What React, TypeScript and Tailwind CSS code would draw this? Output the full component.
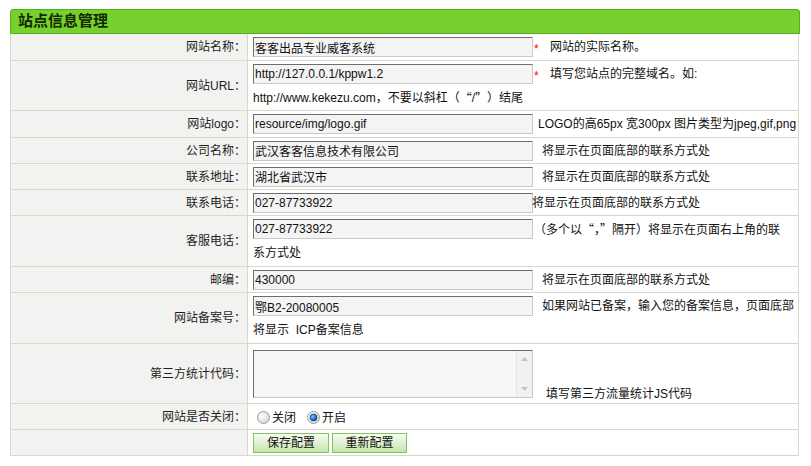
import React from "react";

const FONT = "font-['Liberation_Sans','Noto_Sans_CJK_SC',sans-serif]";
const CJK = "font-['Noto_Sans_CJK_SC',sans-serif]";

function Row({
  label,
  h,
  children,
  valueClass = "",
}: {
  label: string;
  h: string;
  children?: React.ReactNode;
  valueClass?: string;
}) {
  return (
    <div className={`flex border-b border-[#d6d9c8] ${h}`}>
      <div className="w-[237px] shrink-0 border-r border-[#d6d9c8] bg-[#f2f2f0] flex items-center justify-end pr-[1px] text-[#1e1e1e]">
        {label}
      </div>
      <div className={`flex-1 min-w-0 pl-[5px] ${valueClass}`}>{children}</div>
    </div>
  );
}

function Field({ value }: { value: string }) {
  return (
    <input
      readOnly
      value={value}
      className={`${FONT} w-[280px] h-[20px] shrink-0 border border-t-[#6e6e6e] border-l-[#6e6e6e] border-r-[#c9c9c9] border-b-[#c9c9c9] bg-[#f4f4f4] px-[1px] text-[12px] text-[#111] outline-none`}
    />
  );
}

function Star() {
  return (
    <span className="w-[17px] shrink-0 pl-[1px] text-[#f00] relative top-[2px]">*</span>
  );
}

function Radio({ checked }: { checked?: boolean }) {
  return (
    <svg width="13" height="13" viewBox="0 0 13 13" className="shrink-0">
      <defs>
        <radialGradient id={checked ? "rg-on" : "rg-off"} cx="0.35" cy="0.35" r="0.75">
          <stop offset="0" stopColor="#ffffff" />
          <stop offset="1" stopColor="#d3d3cf" />
        </radialGradient>
        <radialGradient id="dot" cx="0.35" cy="0.35" r="0.8">
          <stop offset="0" stopColor="#7cc4ff" />
          <stop offset="0.6" stopColor="#1a74cf" />
          <stop offset="1" stopColor="#0a3f86" />
        </radialGradient>
      </defs>
      <circle cx="6.5" cy="6.5" r="6" fill={`url(#${checked ? "rg-on" : "rg-off"})`} stroke="#9a9b9b" />
      {checked && <circle cx="6.5" cy="6.5" r="3.4" fill="url(#dot)" stroke="#0b3a76" strokeWidth="0.8" />}
    </svg>
  );
}

export default function App() {
  return (
    <div className={`${FONT} bg-white w-[811px] h-[466px] text-[12px] text-[#111]`}>
      <div className="ml-[10px] pt-[9px] w-[790px]">
        <div className="h-[25px] bg-[#76d02e] border border-[#58ad1f] rounded-t-[3px] flex items-center pl-[7px] text-[15px] font-bold text-[#142b00]">
          站点信息管理
        </div>
        <div className="w-[789px] border-x border-[#d6d9c8]">
          <Row label="网站名称：" h="h-[27px]" valueClass="flex items-center">
            <Field value="客客出品专业威客系统" />
            <Star />
            <span>网站的实际名称。</span>
          </Row>

          <Row label="网站URL：" h="h-[50px]" valueClass="pt-[3px]">
            <div className="h-[20px] flex items-center">
              <Field value="http://127.0.0.1/kppw1.2" />
              <Star />
              <span>填写您站点的完整域名。如:</span>
            </div>
            <div className="mt-[4px] h-[20px] flex items-center whitespace-nowrap">
              http://www.kekezu.com，不要以斜杠（<span className={CJK}>“</span>/<span className={CJK}>”</span>）结尾
            </div>
          </Row>

          <Row label="网站logo：" h="h-[27px]" valueClass="flex items-center">
            <Field value="resource/img/logo.gif" />
            <span className="ml-[5px] whitespace-nowrap">LOGO的高65px 宽300px 图片类型为jpeg,gif,png</span>
          </Row>

          <Row label="公司名称：" h="h-[26px]" valueClass="flex items-center">
            <Field value="武汉客客信息技术有限公司" />
            <span className="ml-[9px]">将显示在页面底部的联系方式处</span>
          </Row>

          <Row label="联系地址：" h="h-[26px]" valueClass="flex items-center">
            <Field value="湖北省武汉市" />
            <span className="ml-[9px]">将显示在页面底部的联系方式处</span>
          </Row>

          <Row label="联系电话：" h="h-[26px]" valueClass="flex items-center">
            <Field value="027-87733922" />
            <span className="-ml-[1px]">将显示在页面底部的联系方式处</span>
          </Row>

          <Row label="客服电话：" h="h-[51px]" valueClass="pt-[3px]">
            <div className="h-[20px] flex items-center whitespace-nowrap">
              <Field value="027-87733922" />
              <span className={`${CJK} ml-[1px]`}>（多个以“，”隔开）将显示在页面右上角的联</span>
            </div>
            <div className="mt-[4px] h-[20px] flex items-center">系方式处</div>
          </Row>

          <Row label="邮编：" h="h-[26px]" valueClass="flex items-center">
            <Field value="430000" />
            <span className="ml-[9px]">将显示在页面底部的联系方式处</span>
          </Row>

          <Row label="网站备案号：" h="h-[51px]" valueClass="pt-[3px]">
            <div className="h-[20px] flex items-center whitespace-nowrap">
              <Field value="鄂B2-20080005" />
              <span className="ml-[9px]">如果网站已备案，输入您的备案信息，页面底部</span>
            </div>
            <div className="mt-[4px] h-[20px] flex items-center whitespace-pre">将显示  ICP备案信息</div>
          </Row>

          <Row label="第三方统计代码：" h="h-[60px]" valueClass="pt-[6px] flex items-start">
            <div className="w-[280px] h-[48px] shrink-0 border border-t-[#6e6e6e] border-l-[#6e6e6e] border-r-[#c9c9c9] border-b-[#c9c9c9] bg-[#f6f6f6] flex justify-end">
              <div className="w-[16px] h-full bg-[#f1f1f1] border-l border-[#e4e4e4] flex flex-col justify-between items-center py-[6px]">
                <svg width="7" height="4" viewBox="0 0 7 4">
                  <path d="M0 4 L3.5 0 L7 4 Z" fill="#c4c4c4" />
                </svg>
                <svg width="7" height="4" viewBox="0 0 7 4">
                  <path d="M0 0 L3.5 4 L7 0 Z" fill="#c4c4c4" />
                </svg>
              </div>
            </div>
            <span className="self-end ml-[13px] leading-[16px] mb-[1px]">填写第三方流量统计JS代码</span>
          </Row>

          <Row label="网站是否关闭：" h="h-[26px]" valueClass="flex items-center pt-[2px]">
            <span className="ml-[4px] flex items-center">
              <Radio />
              <span className="ml-[2px]">关闭</span>
            </span>
            <span className="ml-[11px] flex items-center">
              <Radio checked />
              <span className="ml-[2px]">开启</span>
            </span>
          </Row>

          <Row label="" h="h-[26px]" valueClass="flex items-center">
            <button className="w-[76px] h-[20px] border border-[#84c45a] bg-linear-to-b from-[#f8fcf4] to-[#c5e4ad] text-[12px] text-[#111]">
              保存配置
            </button>
            <button className="ml-[3px] w-[75px] h-[20px] border border-[#84c45a] bg-linear-to-b from-[#f8fcf4] to-[#c5e4ad] text-[12px] text-[#111]">
              重新配置
            </button>
          </Row>
        </div>
      </div>
    </div>
  );
}
